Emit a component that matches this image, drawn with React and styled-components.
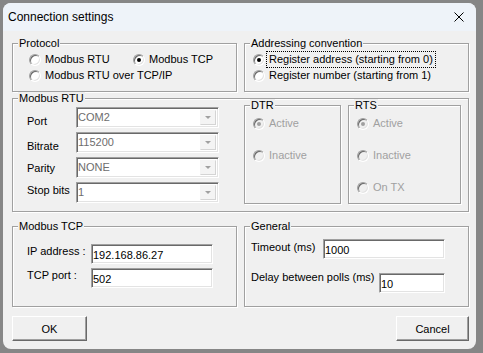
import React from "react";
import styled, { createGlobalStyle } from "styled-components";

const GlobalStyle = createGlobalStyle`
  html, body {
    margin: 0;
    padding: 0;
  }
  body {
    width: 483px;
    height: 353px;
    overflow: hidden;
    background: #868686;
    font-family: "Liberation Sans", Arial, sans-serif;
    font-size: 11px;
    color: #000;
  }
`;

const Screen = styled.div`
  width: 483px;
  height: 353px;
  box-sizing: border-box;
  padding: 3px 0 0 3px;
`;

const Window = styled.div`
  width: 473px;
  height: 346px;
  background: #f0f0f0;
  border-radius: 8px;
  overflow: hidden;
  display: flex;
  flex-direction: column;
`;

const TitleBar = styled.div`
  height: 28px;
  flex: none;
  background: #eef3f9;
  display: flex;
  align-items: center;
  justify-content: space-between;
  padding: 0 12px 0 5px;
  font-size: 12px;
`;

const Body = styled.div`
  padding: 12px 7px 0 9px;
  display: flex;
  flex-direction: column;
`;

const Row = styled.div`
  display: grid;
  grid-template-columns: 225px 225px;
  column-gap: 7px;
  margin-top: ${(p) => p.$gap || 0}px;
`;

const GroupBox = styled.div`
  position: relative;
  box-sizing: border-box;
  height: ${(p) => p.$h}px;
  border: 1px solid #a0a0a0;
  box-shadow: inset 1px 1px 0 #fff, 1px 1px 0 #fff;
`;

const Caption = styled.span`
  position: absolute;
  top: -7px;
  left: 5px;
  padding: 0 1px;
  line-height: 13px;
  background: #f0f0f0;
`;

const ProtocolBox = styled(GroupBox)`
  display: grid;
  grid-template-columns: 104px auto;
  row-gap: 3px;
  align-content: start;
  padding: 9px 0 0 16px;
`;

const RadioStack = styled(GroupBox)`
  display: flex;
  flex-direction: column;
  gap: ${(p) => p.$spacing}px;
  padding: ${(p) => p.$top}px 0 0 8px;
`;

const SideBox = styled(RadioStack)`
  width: ${(p) => p.$w}px;
  margin-left: ${(p) => p.$ml}px;
  flex: none;
`;

const Option = styled.label`
  display: flex;
  align-items: center;
  gap: 4px;
  height: 13px;
  line-height: 13px;
  white-space: nowrap;
  color: ${(p) => (p.$disabled ? "#a0a0a0" : "#000")};
  grid-column: ${(p) => (p.$wide ? "1 / span 2" : "auto")};
`;

const RadioMark = styled.span`
  flex: none;
  width: 12px;
  height: 12px;
  box-sizing: border-box;
  border-radius: 50%;
  border: 1px solid;
  border-color: #a0a0a0 #fff #fff #a0a0a0;
  box-shadow: inset 1px 1px 0 #696969, inset -1px -1px 0 #e3e3e3;
  background: ${(p) => (p.$disabled ? "#f0f0f0" : "#fff")};
  display: flex;
  align-items: center;
  justify-content: center;

  &::after {
    content: "";
    display: ${(p) => (p.$checked ? "block" : "none")};
    width: 4px;
    height: 4px;
    border-radius: 50%;
    background: ${(p) => (p.$disabled ? "#a0a0a0" : "#000")};
  }
`;

const OptionText = styled.span`
  padding: 0 1px;
  margin-left: -1px;
  outline: ${(p) => (p.$focused ? "1px dotted #000" : "none")};
  outline-offset: 1px;
`;

const RtuBox = styled(GroupBox)`
  display: flex;
  align-items: flex-start;
  padding: 6px 0 0 14px;
`;

const SerialGrid = styled.div`
  display: grid;
  grid-template-columns: 49px 143px;
  row-gap: 4px;
  margin-top: 2px;
  flex: none;
`;

const FieldLabel = styled.span`
  line-height: 13px;
  white-space: nowrap;
  padding-top: ${(p) => p.$dy || 0}px;
  margin-top: ${(p) => p.$up || 0}px;
`;

const Combo = styled.div`
  box-sizing: border-box;
  height: 21px;
  border: 1px solid;
  border-color: #a0a0a0 #fff #fff #a0a0a0;
  box-shadow: inset 1px 1px 0 #696969, inset -1px -1px 0 #e3e3e3;
  background: #fff;
  color: #6d6d6d;
  display: flex;
  align-items: center;
  padding-left: 1px;
`;

const ComboValue = styled.span`
  flex: 1;
  line-height: 13px;
`;

const DropButton = styled.span`
  box-sizing: border-box;
  width: 16px;
  height: 15px;
  margin-right: 2px;
  border: 1px solid;
  border-color: #f4f4f4 #d4d4d4 #d4d4d4 #f4f4f4;
  background: #f4f4f4;
  display: flex;
  align-items: center;
  justify-content: center;

  &::after {
    content: "";
    border-left: 3px solid transparent;
    border-right: 3px solid transparent;
    border-top: 3px solid #a0a0a0;
  }
`;

const TcpBox = styled(GroupBox)`
  display: grid;
  grid-template-columns: 64px 122px;
  row-gap: 4px;
  align-content: start;
  padding: 17px 0 0 14px;
`;

const GeneralBox = styled(GroupBox)`
  display: flex;
  flex-direction: column;
  gap: 14px;
  padding: 12px 23px 0 6px;
`;

const FieldRow = styled.div`
  display: flex;
  align-items: flex-start;
`;

const TextBox = styled.input`
  box-sizing: border-box;
  width: ${(p) => p.$w}px;
  height: 20px;
  margin: 0 0 0 ${(p) => (p.$push ? "auto" : "0")};
  padding: 2px 1px 0;
  border: 1px solid;
  border-color: #a0a0a0 #fff #fff #a0a0a0;
  box-shadow: inset 1px 1px 0 #696969, inset -1px -1px 0 #e3e3e3;
  background: #fff;
  font-family: "Liberation Sans", Arial, sans-serif;
  font-size: 11px;
  color: #000;
  outline: none;
`;

const ButtonRow = styled.div`
  display: flex;
  justify-content: space-between;
  margin-top: 9px;
`;

const Button = styled.button`
  box-sizing: border-box;
  width: ${(p) => p.$w}px;
  height: 25px;
  padding: 0;
  border: 1px solid;
  border-color: #fff #696969 #696969 #fff;
  box-shadow: inset -1px -1px 0 #a0a0a0;
  background: #f0f0f0;
  font-family: "Liberation Sans", Arial, sans-serif;
  font-size: 11px;
  color: #000;
`;

function Radio({ label, checked, disabled, focused, wide }) {
  return (
    <Option $disabled={disabled} $wide={wide}>
      <RadioMark $checked={checked} $disabled={disabled} />
      <OptionText $focused={focused}>{label}</OptionText>
    </Option>
  );
}

function CloseIcon() {
  return (
    <svg width="10" height="10" viewBox="0 0 10 10">
      <path d="M0.5 0.5L9.5 9.5M9.5 0.5L0.5 9.5" stroke="#000" strokeWidth="1" />
    </svg>
  );
}

const serialFields = [
  { label: "Port", value: "COM2", dy: 8 },
  { label: "Bitrate", value: "115200", dy: 8 },
  { label: "Parity", value: "NONE", dy: 5 },
  { label: "Stop bits", value: "1", dy: 2 },
];

export default function App() {
  return (
    <Screen>
      <GlobalStyle />
      <Window>
        <TitleBar>
          <span>Connection settings</span>
          <CloseIcon />
        </TitleBar>
        <Body>
          <Row>
            <ProtocolBox $h={49}>
              <Caption>Protocol</Caption>
              <Radio label="Modbus RTU" />
              <Radio label="Modbus TCP" checked />
              <Radio label="Modbus RTU over TCP/IP" wide />
            </ProtocolBox>
            <RadioStack $h={49} $top={9} $spacing={3}>
              <Caption>Addressing convention</Caption>
              <Radio label="Register address (starting from 0)" checked focused />
              <Radio label="Register number (starting from 1)" />
            </RadioStack>
          </Row>

          <RtuBox $h={114} style={{ marginTop: 6 }}>
            <Caption>Modbus RTU</Caption>
            <SerialGrid>
              {serialFields.map((f) => (
                <React.Fragment key={f.label}>
                  <FieldLabel $dy={f.dy}>{f.label}</FieldLabel>
                  <Combo>
                    <ComboValue>{f.value}</ComboValue>
                    <DropButton />
                  </Combo>
                </React.Fragment>
              ))}
            </SerialGrid>
            <SideBox $h={99} $w={97} $ml={25} $top={11} $spacing={19}>
              <Caption>DTR</Caption>
              <Radio label="Active" checked disabled />
              <Radio label="Inactive" disabled />
            </SideBox>
            <SideBox $h={99} $w={113} $ml={7} $top={11} $spacing={19}>
              <Caption>RTS</Caption>
              <Radio label="Active" checked disabled />
              <Radio label="Inactive" disabled />
              <Radio label="On TX" disabled />
            </SideBox>
          </RtuBox>

          <Row $gap={14}>
            <TcpBox $h={81}>
              <Caption>Modbus TCP</Caption>
              <FieldLabel $dy={1}>IP address :</FieldLabel>
              <TextBox $w={122} defaultValue="192.168.86.27" />
              <FieldLabel $dy={1}>TCP port :</FieldLabel>
              <TextBox $w={122} defaultValue="502" />
            </TcpBox>
            <GeneralBox $h={81}>
              <Caption>General</Caption>
              <FieldRow>
                <FieldLabel $dy={2}>Timeout (ms)</FieldLabel>
                <TextBox $w={122} $push defaultValue="1000" />
              </FieldRow>
              <FieldRow>
                <FieldLabel $up={-2}>Delay between polls (ms)</FieldLabel>
                <TextBox $w={66} $push defaultValue="10" />
              </FieldRow>
            </GeneralBox>
          </Row>

          <ButtonRow>
            <Button $w={75}>OK</Button>
            <Button $w={73}>Cancel</Button>
          </ButtonRow>
        </Body>
      </Window>
    </Screen>
  );
}
